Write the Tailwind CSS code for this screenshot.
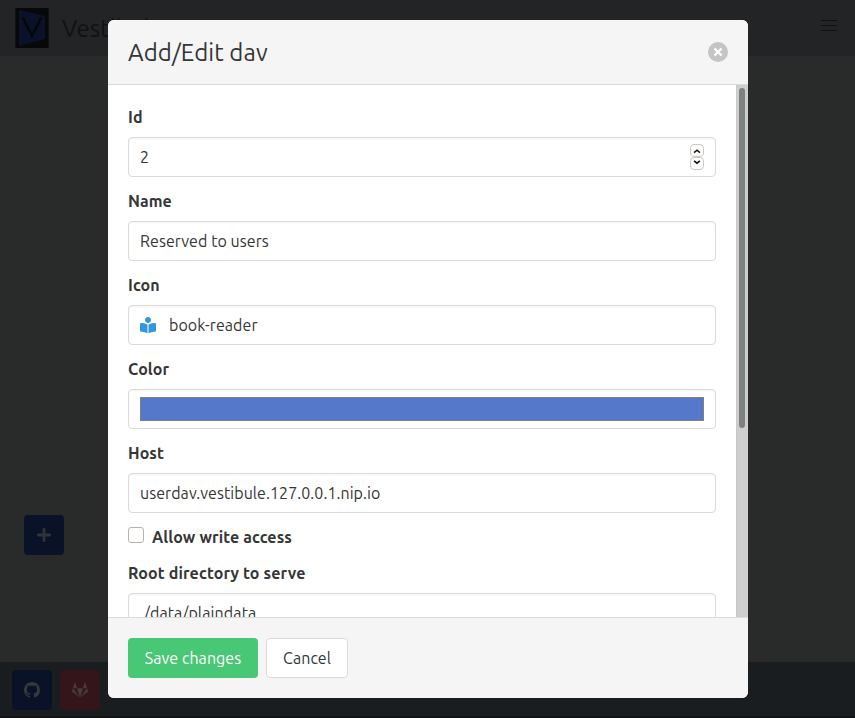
<!DOCTYPE html>
<html lang="en">
<head>
<meta charset="utf-8">
<title>Vestibule</title>
<script src="https://cdn.jsdelivr.net/npm/@tailwindcss/browser@4"></script>
</head>
<body class="relative h-[718px] w-[855px] overflow-hidden bg-[#292b2a] font-['Ubuntu','Noto_Sans',sans-serif] text-base leading-6 tracking-[0.06px] text-[#363636]">
<div class="flex h-full flex-col">
  <header class="flex h-14 shrink-0 items-center bg-[#222425] pl-[15px] pr-[18px]">
    <svg class="h-10 w-[34px]" viewBox="0 0 34 40"><path fill="#070808" d="M.4 0h33.200v40H.4z"/><path fill="#09122a" d="M4 2l26 6v23L4 38z"/><path d="M8 9.800l9 18L26 9.800" fill="none" stroke="#050608" stroke-width="2.400"/></svg>
    <span class="ml-[13px] pt-0.5 text-2xl text-[#111213]">Vestibule</span>
    <svg class="ml-auto -mt-1 h-4 w-4" viewBox="0 0 16 16"><path d="M0 2.5h16M0 7.5h16M0 12.5h16" stroke="#101112"/></svg>
  </header>
  <main class="flex flex-1 items-end pb-[107px] pl-6">
    <button class="flex h-10 w-10 items-center justify-center rounded bg-[#0a1227]"><svg class="h-[14px] w-[14px]" viewBox="0 0 14 14"><path d="M7 1.2v11.6M1.2 7h11.6" stroke="#303337" stroke-width="2.8" stroke-linecap="round"/></svg></button>
  </main>
  <footer class="flex h-14 shrink-0 gap-2 border-b-2 border-[#121315] bg-[#191d20] pl-3 pt-2">
    <a class="flex h-10 w-10 items-center justify-center rounded bg-[#0a1227]"><svg class="h-4 w-4" viewBox="0 0 16 16"><path fill="#363839" d="M8 0C3.58 0 0 3.58 0 8c0 3.54 2.29 6.53 5.47 7.59.4.07.55-.17.55-.38 0-.19-.01-.82-.01-1.49-2.01.37-2.53-.49-2.69-.94-.09-.23-.48-.94-.82-1.13-.28-.15-.68-.52-.01-.53.63-.01 1.08.58 1.23.82.72 1.21 1.87.87 2.33.66.07-.52.28-.87.51-1.07-1.78-.2-3.64-.89-3.64-3.95 0-.87.31-1.59.82-2.15-.08-.2-.36-1.02.08-2.12 0 0 .67-.21 2.2.82.64-.18 1.32-.27 2-.27s1.36.09 2 .27c1.53-1.04 2.2-.82 2.2-.82.44 1.1.16 1.92.08 2.12.51.56.82 1.27.82 2.15 0 3.07-1.87 3.75-3.65 3.95.29.25.54.73.54 1.48 0 1.07-.01 1.93-.01 2.2 0 .21.15.46.55.38A8.01 8.01 0 0016 8c0-4.42-3.58-8-8-8z"/></svg></a>
    <a class="flex h-10 w-10 items-center justify-center rounded bg-[#341519]"><svg class="h-4 w-4" viewBox="0 0 512 512"><path fill="#4a3a3c" d="M105.200 24.900c-3.100-8.900-15.700-8.900-18.900 0L29.800 199.700h132zM.9 287.700c-2.600 8 .3 16.900 7.100 22l247.900 184-226.200-294zm160.800-88l94.300 294 94.300-294zm349.400 88l-28.800-88-226.300 294 247.900-184c6.900-5.100 9.700-14 7.200-22zM425.700 24.900c-3.100-8.900-15.700-8.900-18.900 0l-56.600 174.800h132z"/></svg></a>
  </footer>
</div>

<div class="absolute left-[96px] top-[113px] h-[548px] w-[665px] rounded-tr-2xl bg-[#2a2a2a]"></div>

<div class="absolute left-[108px] top-5 flex h-[678px] w-[640px] flex-col overflow-hidden rounded-md bg-white">
  <div class="flex h-[65px] shrink-0 items-center justify-between border-b border-[#dbdbdb] bg-[#f5f5f5] px-5">
    <h1 class="pt-0.5 text-2xl leading-6 tracking-[0.09px]">Add/Edit dav</h1>
    <svg class="h-5 w-5" viewBox="0 0 20 20"><circle cx="10" cy="10" r="10" fill="#c4c4c4"/><path d="M6.500 6.500l7 7M13.500 6.500l-7 7" stroke="#fff" stroke-width="2.4"/></svg>
  </div>
  <div class="flex min-h-0 flex-1">
    <div class="flex flex-1 flex-col gap-3 overflow-hidden px-5 pt-5">
      <div class="flex shrink-0 flex-col gap-2"><b>Id</b>
        <div class="flex h-10 items-center justify-between rounded border border-[#dbdbdb] px-[11px] shadow-[inset_0_1px_2px_rgba(10,10,10,0.05)]"><span>2</span>
          <svg class="h-[26px] w-[14px]" viewBox="0 0 14 26" fill="none"><rect x=".5" y=".5" width="13" height="12" rx="3.5" stroke="#cdc7c2"/><rect x=".5" y="13.5" width="13" height="12" rx="3.5" stroke="#cdc7c2"/><path d="M4.100 8.6L7 6.2l2.900 2.400M4.100 16.8L7 19.2l2.900-2.4" stroke="#111" stroke-width="1.5"/></svg></div></div>
      <div class="flex shrink-0 flex-col gap-2"><b>Name</b>
        <div class="flex h-10 items-center rounded border border-[#dbdbdb] px-[11px] shadow-[inset_0_1px_2px_rgba(10,10,10,0.05)]">Reserved to users</div></div>
      <div class="flex shrink-0 flex-col gap-2"><b>Icon</b>
        <div class="flex h-10 items-center gap-[13px] rounded border border-[#dbdbdb] px-[11px] shadow-[inset_0_1px_2px_rgba(10,10,10,0.05)]"><svg class="h-4 w-4" viewBox="0 0 512 512"><path fill="#3298dc" d="M352 96c0-53.02-42.98-96-96-96s-96 42.98-96 96 42.98 96 96 96 96-42.98 96-96zM233.59 241.1c-59.33-36.32-155.43-46.3-203.79-49.05C13.55 191.13 0 203.51 0 219.14v222.8c0 14.33 11.59 26.28 26.49 27.05 43.66 2.29 131.99 10.68 193.04 41.43 9.37 4.72 20.48-1.71 20.48-11.87V252.56c-.01-4.67-2.32-8.95-6.42-11.46zm248.61-49.05c-48.35 2.74-144.46 12.73-203.78 49.05-4.1 2.51-6.41 6.96-6.41 11.63v245.79c0 10.19 11.14 16.63 20.54 11.9 61.04-30.72 149.32-39.11 192.97-41.4 14.9-.78 26.49-12.73 26.49-27.06V219.14c-.01-15.63-13.56-28.01-29.81-27.09z"/></svg>book-reader</div></div>
      <div class="flex shrink-0 flex-col gap-2"><b>Color</b>
        <div class="flex h-10 items-center rounded border border-[#dbdbdb] px-[11px] shadow-[inset_0_1px_2px_rgba(10,10,10,0.05)]"><div class="h-6 flex-1 border border-[#808080] bg-[#5479cb]"></div></div></div>
      <div class="flex shrink-0 flex-col gap-2"><b>Host</b>
        <div class="flex h-10 items-center rounded border border-[#dbdbdb] px-[11px] shadow-[inset_0_1px_2px_rgba(10,10,10,0.05)]">userdav.vestibule.127.0.0.1.nip.io</div></div>
      <div class="flex shrink-0 items-center gap-2"><div class="mb-[5px] h-4 w-4 rounded-[3px] border border-[#b8b2ac]"></div><b class="tracking-[0.11px]">Allow write access</b></div>
      <div class="flex shrink-0 flex-col gap-2"><b class="tracking-[0.12px]">Root directory to serve</b>
        <div class="flex h-10 items-center rounded border border-[#dbdbdb] px-[15px] tracking-[0.12px] shadow-[inset_0_1px_2px_rgba(10,10,10,0.05)]">/data/plaindata</div></div>
    </div>
    <div class="w-3 border-l border-[#cdc7c2] bg-[#cecece] pl-0.5 pt-[3px]"><div class="h-[340px] w-1.5 rounded-full bg-[#7e8182]"></div></div>
  </div>
  <div class="flex h-[81px] shrink-0 items-center gap-2 border-t border-[#dbdbdb] bg-[#f5f5f5] px-5">
    <button class="h-10 w-[130px] rounded bg-[#48c774] tracking-[0.06px] text-white">Save changes</button>
    <button class="h-10 w-[82px] rounded border border-[#dbdbdb] bg-white tracking-[0.06px]">Cancel</button>
  </div>
</div>
</body>
</html>
